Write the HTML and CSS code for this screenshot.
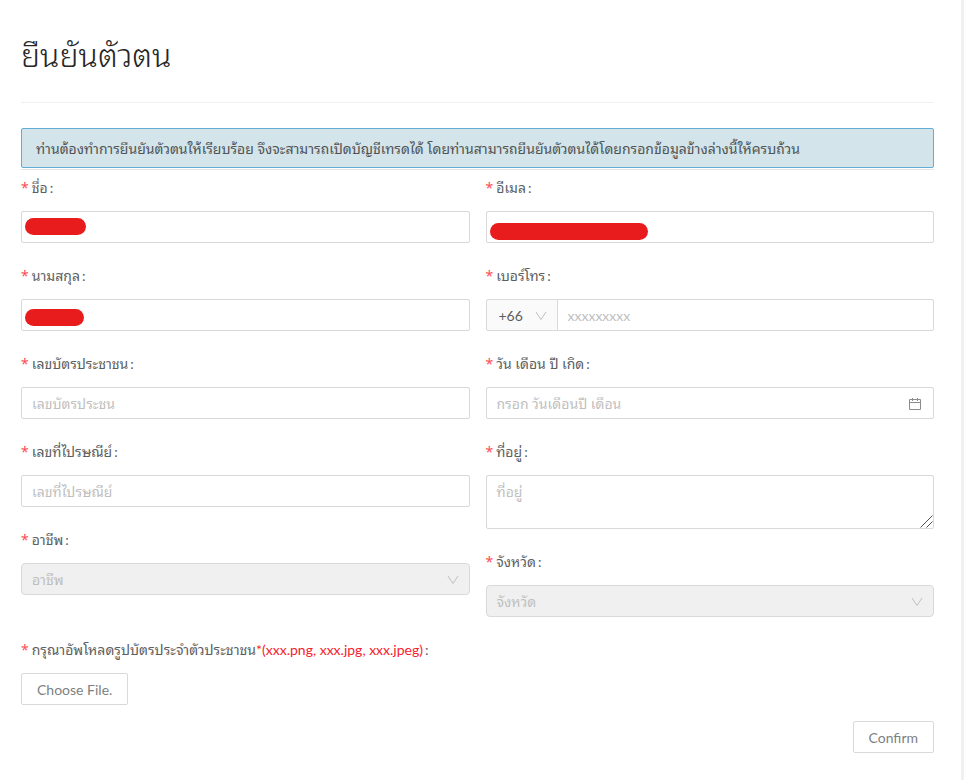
FILE: index.html
```html
<!DOCTYPE html>
<html lang="th">
<head>
    <meta charset="UTF-8">
    <meta name="viewport" content="width=device-width, initial-scale=1.0">
    <title>ยืนยันตัวตน</title>
    <link rel="stylesheet" href="styles.css">
</head>
<body>

    <main class="page">
        <h1>ยืนยันตัวตน</h1>

        <div class="alert">ท่านต้องทำการยืนยันตัวตนให้เรียบร้อย จึงจะสามารถเปิดบัญชีเทรดได้ โดยท่านสามารถยืนยันตัวตนได้โดยกรอกข้อมูลข้างล่างนี้ให้ครบถ้วน</div>

        <form class="verify-form">
            <div class="columns">
                <!-- Left column -->
                <div class="column">
                    <div class="form-group">
                        <label for="firstName">ชื่อ</label>
                        <div class="control">
                            <input type="text" id="firstName">
                            <span class="mask mask-first"></span>
                        </div>
                    </div>
                    <div class="form-group">
                        <label for="lastName">นามสกุล</label>
                        <div class="control">
                            <input type="text" id="lastName">
                            <span class="mask mask-last"></span>
                        </div>
                    </div>
                    <div class="form-group">
                        <label for="cardId">เลขบัตรประชาชน</label>
                        <input type="text" id="cardId" placeholder="เลขบัตรประชน">
                    </div>
                    <div class="form-group">
                        <label for="zipCode">เลขที่ไปรษณีย์</label>
                        <input type="text" id="zipCode" placeholder="เลขที่ไปรษณีย์">
                    </div>
                    <div class="form-group">
                        <label for="career">อาชีพ</label>
                        <div class="control">
                            <select id="career" disabled>
                                <option>อาชีพ</option>
                            </select>
                            <svg class="icon arrow" viewBox="0 0 12 12"><path d="M1 2 L6 9.5 L11 2"/></svg>
                        </div>
                    </div>
                </div>

                <!-- Right column -->
                <div class="column">
                    <div class="form-group">
                        <label for="email">อีเมล</label>
                        <div class="control">
                            <input type="text" id="email">
                            <span class="mask mask-email"></span>
                        </div>
                    </div>
                    <div class="form-group">
                        <label for="phone">เบอร์โทร</label>
                        <div class="phone">
                            <div class="control prefix">
                                <select aria-label="รหัสประเทศ">
                                    <option>+66</option>
                                </select>
                                <svg class="icon arrow" viewBox="0 0 12 12"><path d="M1 2 L6 9.5 L11 2"/></svg>
                            </div>
                            <input type="tel" id="phone" placeholder="xxxxxxxxx">
                        </div>
                    </div>
                    <div class="form-group">
                        <label for="birthday">วัน เดือน ปี เกิด</label>
                        <div class="control">
                            <input type="text" id="birthday" placeholder="กรอก วันเดือนปี เดือน">
                            <svg class="icon calendar" viewBox="0 0 14 14"><path d="M1.5 2.5 H12.5 V12.5 H1.5 Z M1.5 5.5 H12.5 M4.5 1 V4 M9.5 1 V4"/></svg>
                        </div>
                    </div>
                    <div class="form-group">
                        <label for="address">ที่อยู่</label>
                        <div class="control">
                            <textarea id="address" rows="2" placeholder="ที่อยู่"></textarea>
                            <svg class="icon grip" viewBox="0 0 13 13"><path d="M0.5 12.5 L12.5 0.5 M6.5 12.5 L12.5 6.5"/></svg>
                        </div>
                    </div>
                    <div class="form-group">
                        <label for="province">จังหวัด</label>
                        <div class="control">
                            <select id="province" disabled>
                                <option>จังหวัด</option>
                            </select>
                            <svg class="icon arrow" viewBox="0 0 12 12"><path d="M1 2 L6 9.5 L11 2"/></svg>
                        </div>
                    </div>
                </div>
            </div>

            <div class="upload">
                <label for="chooseFile">กรุณาอัพโหลดรูปบัตรประจำตัวประชาชน<span class="hint">*(xxx.png, xxx.jpg, xxx.jpeg)</span></label>
                <button type="button" id="chooseFile">Choose File.</button>
            </div>

            <div class="actions">
                <button type="submit">Confirm</button>
            </div>
        </form>
    </main>

</body>
</html>
```

FILE: styles.css
```css
* {
    box-sizing: border-box;
}

body {
    margin: 0;
    background: #f0f0f5;
    font-family: Lato, "Noto Sans Thai Looped", Sarabun, Loma, Garuda, sans-serif;
    font-size: 14px;
    color: #5c5f62;
}

.page {
    min-height: 100vh;
    margin-right: 3px;
    padding: 30px 27px 27px 21px;
    background: #fff;
}

h1 {
    margin: 0 0 25px;
    padding-bottom: 22px;
    border-bottom: 1px solid #f0f0f0;
    font-size: 32px;
    font-weight: 300;
    line-height: 50px;
    color: #262626;
}

.alert {
    padding: 9px 14px 7px;
    border: 1px solid #62add3;
    border-radius: 2px;
    background: #d3e4ea;
    line-height: 22px;
    color: #505457;
}

.verify-form {
    margin-top: 1px;
    padding-top: 9px;
    border-top: 1px solid #e4e4e4;
}

.columns {
    display: flex;
    gap: 16px;
}

.column {
    flex: 1;
    min-width: 0;
}

.form-group {
    margin-bottom: 24px;
}

label {
    display: block;
    height: 32px;
    line-height: 18px;
}

label::before {
    content: "*";
    margin-right: 3px;
    font-family: "Noto Sans", sans-serif;
    line-height: 1;
    color: #ff4d4f;
}

label::after {
    content: ":";
    margin-left: 2px;
}

.hint {
    color: #f5222d;
}

.control {
    position: relative;
}

input,
select,
textarea {
    display: block;
    width: 100%;
    height: 32px;
    padding: 5px 10px 3px;
    border: 1px solid #d9d9d9;
    border-radius: 2px;
    background: #fff;
    font: inherit;
    line-height: 22px;
    color: #5c5f62;
    outline: none;
}

input:focus,
textarea:focus {
    border-color: #62add3;
}

input::placeholder,
textarea::placeholder {
    color: #bfbfbf;
}

input {
    padding: 4px 10px;
}

textarea {
    height: 54px;
    resize: vertical;
}

textarea::-webkit-resizer {
    background: transparent;
}

select {
    appearance: none;
}

select:disabled {
    border-radius: 4px;
    background: #f0f0f0;
    color: #bfbfbf;
    opacity: 1;
}

/* Phone number with country code */
.phone {
    display: flex;
}

.prefix {
    flex: 0 0 72px;
}

.prefix select {
    padding-left: 12px;
    border-radius: 2px 0 0 2px;
    background: #fafafa;
}

.phone input {
    flex: 1;
    min-width: 0;
    margin-left: -1px;
    border-radius: 0 2px 2px 0;
}

/* Icons inside the fields */
.icon {
    position: absolute;
    right: 11px;
    fill: none;
    stroke: #bfbfbf;
    pointer-events: none;
}

.arrow {
    top: 11px;
    width: 12px;
    height: 12px;
}

.calendar {
    top: 10px;
    right: 12px;
    width: 14px;
    height: 14px;
    stroke: #8c8c8c;
}

.grip {
    right: 1px;
    bottom: 1px;
    width: 13px;
    height: 13px;
    stroke: #505050;
}

/* Hidden personal data */
.mask {
    position: absolute;
    left: 4px;
    height: 17px;
    border-radius: 9px;
    background: #e81c1c;
}

.mask-first {
    top: 7px;
    width: 61px;
}

.mask-last {
    top: 10px;
    width: 59px;
}

.mask-email {
    top: 12px;
    width: 158px;
}

button {
    height: 32px;
    padding: 0 15px;
    border: 1px solid #d9d9d9;
    border-radius: 2px;
    background: #fff;
    font: inherit;
    color: #7d7f82;
    cursor: pointer;
}

button:hover {
    border-color: #62add3;
    color: #62add3;
}

.actions {
    display: flex;
    justify-content: flex-end;
    margin-top: 16px;
}
```
